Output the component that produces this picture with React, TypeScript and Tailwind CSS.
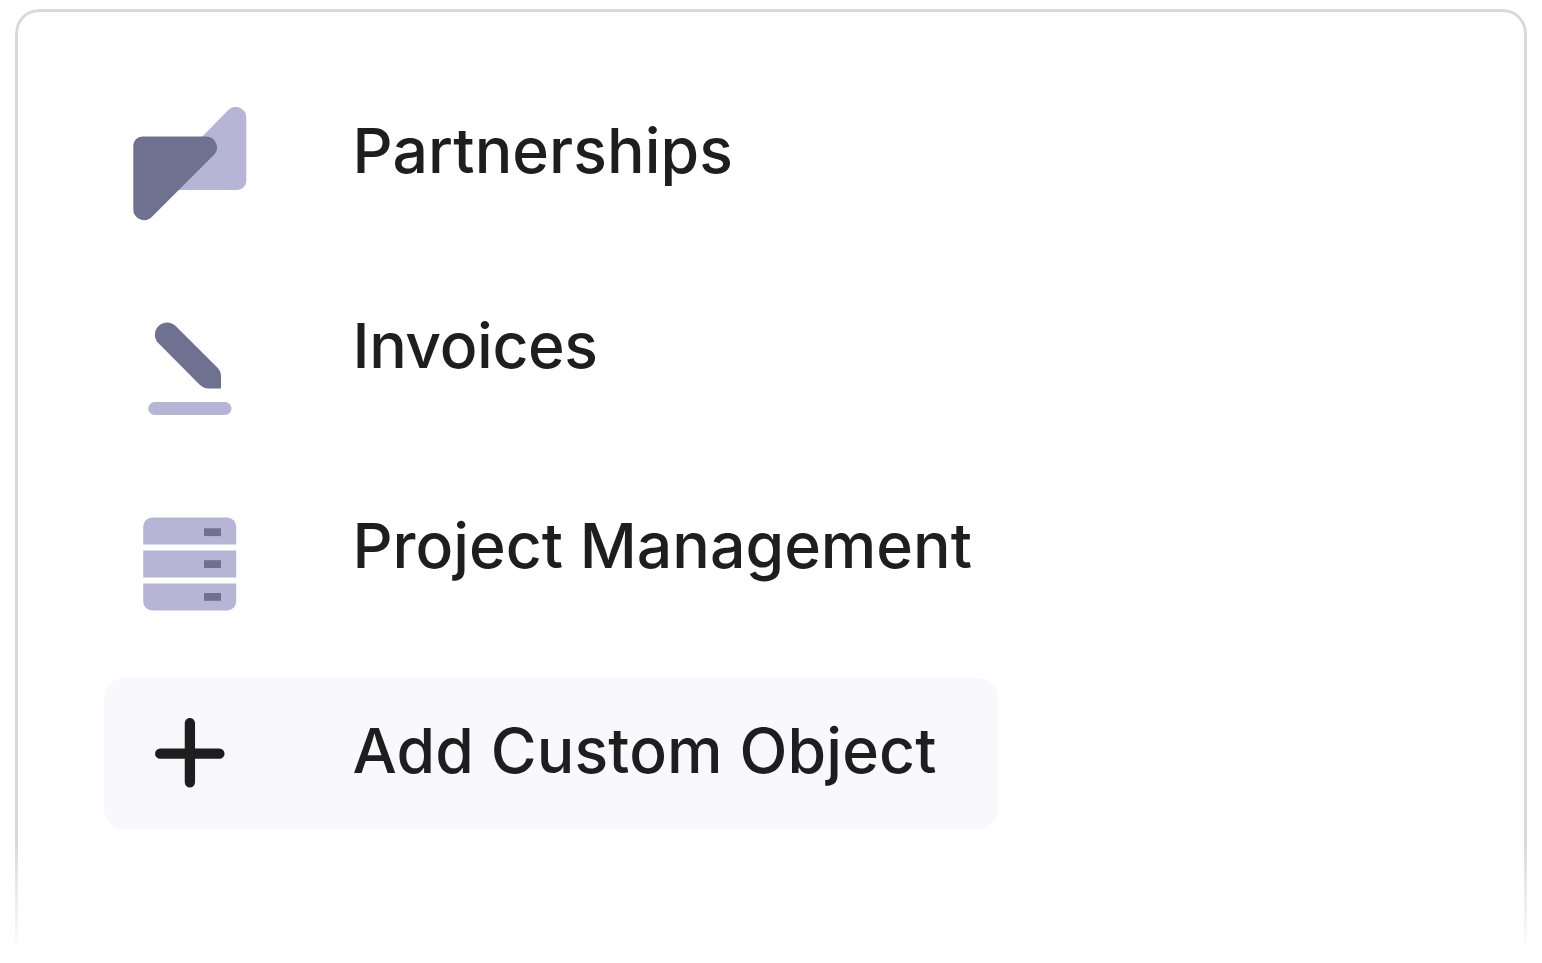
import type { ReactNode } from "react";

function PartnershipsIcon() {
  return (
    <svg width="114" height="114" viewBox="133 107 114 114">
      <path
        d="M228 110.200 A10.700 10.700 0 0 1 246.300 117.800 V181 A9 9 0 0 1 237.300 190 H150 Z"
        fill="#b6b5d6"
      />
      <path
        d="M142.300 136.500 H205.900 A10.900 10.900 0 0 1 213.600 155.200 L152 216.800 A10.900 10.900 0 0 1 133.300 209 V145.500 A9 9 0 0 1 142.300 136.500 Z"
        fill="#6f7190"
      />
    </svg>
  );
}

function InvoicesIcon() {
  return (
    <svg width="84" height="94" viewBox="148 322 84 94">
      <path
        d="M158.500 326 A12.200 12.200 0 0 1 175.700 326 L217.300 367.600 A12.500 12.500 0 0 1 221 376.500 V388.500 H208.500 A12.500 12.500 0 0 1 199.700 384.800 L158.500 343.300 A12.200 12.200 0 0 1 158.500 326 Z"
        fill="#6f7190"
      />
      <rect x="148.200" y="402" width="83.300" height="13" rx="6.500" fill="#b6b5d6" />
    </svg>
  );
}

function ProjectIcon() {
  return (
    <svg width="94" height="94" viewBox="143 517 94 94">
      <path d="M152.200 517.500 H227.200 A9 9 0 0 1 236.200 526.500 V544.500 H143.200 V526.500 A9 9 0 0 1 152.200 517.500 Z" fill="#b6b5d6" />
      <rect x="143.200" y="550.500" width="93" height="27" fill="#b6b5d6" />
      <path d="M143.200 583.500 H236.200 V601.500 A9 9 0 0 1 227.200 610.500 H152.200 A9 9 0 0 1 143.200 601.500 Z" fill="#b6b5d6" />
      <rect x="204" y="528.300" width="17" height="7.800" fill="#6f7190" />
      <rect x="204" y="560.200" width="17" height="7.800" fill="#6f7190" />
      <rect x="204" y="593" width="17" height="7.800" fill="#6f7190" />
    </svg>
  );
}

function PlusIcon() {
  return (
    <svg width="70" height="70" viewBox="0 0 70 70">
      <path d="M34.900 5.100 V64.300 M5.200 35.700 H64.400" stroke="#1e1e1f" strokeWidth="10.300" strokeLinecap="round" />
    </svg>
  );
}

type RowProps = {
  icon: ReactNode;
  label: string;
  className: string;
  iconClass?: string;
  labelClass: string;
};

function Row({ icon, label, className, iconClass = "pt-[95px]", labelClass }: RowProps) {
  return (
    <div className={`flex ${className}`}>
      <div className={`flex w-[172px] shrink-0 justify-center ${iconClass}`}>{icon}</div>
      <span className={`ml-[76.5px] whitespace-nowrap ${labelClass}`}>{label}</span>
    </div>
  );
}

export default function App() {
  return (
    <main className="h-[963px] w-full overflow-hidden bg-white px-[15px] pt-[9px] font-['Inter',sans-serif] text-[62.5px] leading-[80px] font-medium text-[#1e1e1f]">
      <div className="h-[945px] rounded-t-[24px] border-[3px] border-b-0 border-[#d9d9db] pl-[86px] [mask-image:linear-gradient(to_bottom,black_88%,transparent_100%)]">
        <Row icon={<PartnershipsIcon />} label="Partnerships" className="h-[215px]" labelClass="pt-[98px] tracking-[0.08px]" />
        <Row icon={<InvoicesIcon />} label="Invoices" className="h-[195px]" labelClass="pt-[78px] tracking-[-0.4px]" />
        <Row icon={<ProjectIcon />} label="Project Management" className="h-[256px]" labelClass="pt-[83px]" />
        <Row
          icon={<PlusIcon />}
          label="Add Custom Object"
          className="h-[151px] w-[894px] rounded-[20px] bg-[#f9f8fd]"
          iconClass="pt-[40px]"
          labelClass="pt-[32px] tracking-[0.14px]"
        />
      </div>
    </main>
  );
}
